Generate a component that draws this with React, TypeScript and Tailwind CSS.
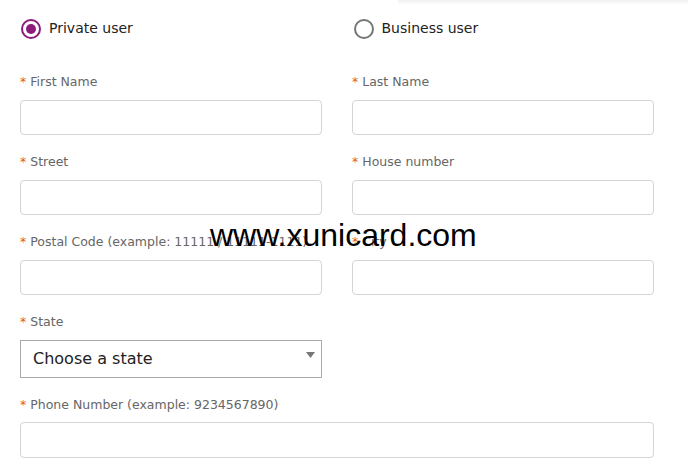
import { ReactNode } from "react";

const Label = ({ children }: { children: ReactNode }) => (
  <label className="block h-[18px] text-[12.5px] leading-[18px] text-[#666]">
    <span className="text-[#e2572b]">*</span> {children}
  </label>
);

const Field = ({ label }: { label: string }) => (
  <div className="flex flex-col gap-[9px]">
    <Label>{label}</Label>
    <input className="h-[35px] w-full rounded-[4px] border border-[#d4d4d4] bg-white px-2 outline-none" />
  </div>
);

const Radio = ({ checked, label }: { checked?: boolean; label: string }) => (
  <label className="flex items-center gap-[8px] text-[14px] text-[#222]">
    {checked ? (
      <span className="flex h-[20px] w-[20px] items-center justify-center rounded-full border-[2px] border-[#8e1a7c]">
        <span className="h-[10px] w-[10px] rounded-full bg-[#8e1a7c]" />
      </span>
    ) : (
      <span className="h-[20px] w-[20px] rounded-full border-[2px] border-[#767676]" />
    )}
    {label}
  </label>
);

export default function App() {
  return (
    <div className="relative h-[469px] w-[688px] overflow-hidden bg-white font-['DejaVu_Sans',sans-serif]">
      {/* faint shadow of a header above */}
      <div className="absolute right-0 top-0 h-[5px] w-[290px] bg-gradient-to-b from-[#f0f0f0] to-white" />

      <div className="px-[20px] pt-[18px]">
        <div className="grid w-[634px] grid-cols-2 gap-x-[32px] pl-[1px]">
          <Radio checked label="Private user" />
          <Radio label="Business user" />
        </div>

        <div className="mt-[34px] grid w-[634px] grid-cols-2 gap-x-[30px] gap-y-[18px]">
          <Field label="First Name" />
          <Field label="Last Name" />
          <Field label="Street" />
          <Field label="House number" />
          <Field label="Postal Code (example: 11111 / 11111-1111)" />
          <Field label="City" />
          <div className="flex flex-col gap-[9px]">
            <Label>State</Label>
            <div className="relative flex h-[38px] items-center border border-[#aaa] bg-white pl-[12px] text-[16px] text-[#222]">
              Choose a state
              <svg className="absolute right-[6px] top-[11px]" width="9" height="6" viewBox="0 0 9 6">
                <path d="M0 0h9L4.5 6z" fill="#777" />
              </svg>
            </div>
          </div>
          <div />
        </div>

        <div className="mt-[18px] flex flex-col gap-[8px]">
          <Label>Phone Number (example: 9234567890)</Label>
          <input className="h-[36px] w-[634px] rounded-[4px] border border-[#d4d4d4] bg-white px-2 outline-none" />
        </div>
      </div>

      {/* watermark */}
      <div className="pointer-events-none absolute left-[210px] top-[215px] font-['Liberation_Sans',sans-serif] text-[32px] leading-[40px] text-black">
        www.xunicard.com
      </div>
    </div>
  );
}
